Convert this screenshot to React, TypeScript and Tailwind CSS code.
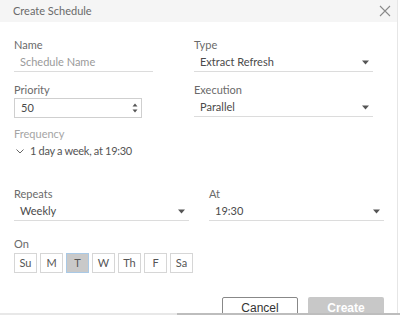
import React, { useState } from "react";

const font = { fontFamily: 'Lato, "Liberation Sans", sans-serif' };

function Caret() {
    return (
        <svg width="7" height="5" viewBox="0 0 7 5" className="shrink-0">
            <path d="M0 0.5 L7 0.5 L3.5 4.5 Z" fill="#555" />
        </svg>
    );
}

function Label({ children, light }: { children: React.ReactNode; light?: boolean }) {
    return (
        <div className={`h-[14px] leading-[14px] text-[11px] ${light ? "text-[#a5a5a5]" : "text-[#6a6a6a]"}`}>
            {children}
        </div>
    );
}

function Select({ value, width }: { value: string; width: string }) {
    return (
        <div className={`${width} h-[18px] flex items-center justify-between pl-[6px] pr-[4px] border-b border-[#dcdcdc] text-[11px] text-[#4a4a4a]`}>
            <span>{value}</span>
            <Caret />
        </div>
    );
}

export default function App() {
    const [day, setDay] = useState("T");
    const days = ["Su", "M", "T", "W", "Th", "F", "Sa"];

    return (
        <div style={font} className="relative w-[400px] h-[315px] overflow-hidden bg-white">
            <div className="w-[398px] h-full border-r border-[#e6e6e6]">
                {/* Header */}
                <div className="h-[22px] bg-[#f5f5f5] flex items-center justify-between pl-[13px] pr-[6px]">
                    <span className="text-[11px] text-[#6a6a6a]">Create Schedule</span>
                    <svg width="12" height="12" viewBox="0 0 12 12">
                        <path d="M1 1 L11 11 M11 1 L1 11" stroke="#8a8a8a" strokeWidth="1.1" />
                    </svg>
                </div>

                <div className="pl-[14px] pt-[16px]">
                    {/* Name / Type */}
                    <div className="flex">
                        <div className="w-[180px]">
                            <Label>Name</Label>
                            <div className="mt-[2px] w-[139px] h-[18px] flex items-center pl-[6px] border-b border-[#dcdcdc] text-[11px] text-[#9a9a9a]">
                                Schedule Name
                            </div>
                        </div>
                        <div>
                            <Label>Type</Label>
                            <div className="mt-[2px]">
                                <Select value="Extract Refresh" width="w-[179px]" />
                            </div>
                        </div>
                    </div>

                    {/* Priority / Execution */}
                    <div className="flex mt-[11px]">
                        <div className="w-[180px]">
                            <Label>Priority</Label>
                            <div className="mt-[1px] w-[128px] h-[20px] flex items-center justify-between pl-[6px] pr-[3px] border border-[#cfcfcf] text-[11px] text-[#4a4a4a]">
                                <span>50</span>
                                <svg width="6" height="12" viewBox="0 0 6 12">
                                    <path d="M0.5 4.5 L5.5 4.5 L3 1.5 Z" fill="#555" />
                                    <path d="M0.5 7.5 L5.5 7.5 L3 10.5 Z" fill="#555" />
                                </svg>
                            </div>
                        </div>
                        <div>
                            <Label>Execution</Label>
                            <div className="mt-[2px]">
                                <Select value="Parallel" width="w-[179px]" />
                            </div>
                        </div>
                    </div>

                    {/* Frequency */}
                    <div className="mt-[9px]">
                        <Label light>Frequency</Label>
                        <div className="mt-[3px] h-[14px] flex items-center gap-[6px] text-[11px] text-[#555]">
                            <svg width="8" height="5" viewBox="0 0 8 5" className="ml-[2px]">
                                <path d="M0.5 0.5 L4 4 L7.5 0.5" stroke="#666" strokeWidth="1" fill="none" />
                            </svg>
                            <span className="tracking-[-0.3px]">1 day a week, at 19:30</span>
                        </div>
                    </div>

                    {/* Repeats / At */}
                    <div className="flex mt-[29px]">
                        <div className="w-[195px]">
                            <Label>Repeats</Label>
                            <div className="mt-[2px]">
                                <Select value="Weekly" width="w-[175px]" />
                            </div>
                        </div>
                        <div>
                            <Label>At</Label>
                            <div className="mt-[2px]">
                                <Select value="19:30" width="w-[175px]" />
                            </div>
                        </div>
                    </div>

                    {/* On */}
                    <div className="mt-[16px]">
                        <Label>On</Label>
                        <div className="mt-[2px] flex gap-[3px]">
                            {days.map((d) => (
                                <button
                                    key={d}
                                    onClick={() => setDay(d)}
                                    className={`w-[23px] h-[20px] flex items-center justify-center text-[11px] text-[#555] border ${
                                        day === d
                                            ? "bg-[#c9c9c9] border-[#a9c9e6]"
                                            : "bg-white border-[#d6d6d6]"
                                    }`}
                                >
                                    {d}
                                </button>
                            ))}
                        </div>
                    </div>

                    {/* Footer */}
                    <div className="flex justify-end gap-[10px] pr-[13px] mt-[24px]">
                        <button
                            className="w-[76px] h-[22px] border border-[#888] rounded-[2px] bg-white text-[12px] text-[#333]"
                            style={{ fontFamily: '"Liberation Sans", Arial, sans-serif' }}
                        >
                            Cancel
                        </button>
                        <button
                            className="w-[76px] h-[22px] rounded-[2px] bg-[#c8c8c8] text-[12px] font-bold text-white"
                            style={{ fontFamily: '"Liberation Sans", Arial, sans-serif' }}
                        >
                            Create
                        </button>
                    </div>
                </div>
            </div>
            {/* bottom edge line */}
            <div className="absolute left-0 right-0 bottom-0 h-[2px] flex">
                <div className="w-[177px] bg-[#e8e8e8]" />
                <div className="flex-1 bg-[#bdbdbd]" />
            </div>
        </div>
    );
}
